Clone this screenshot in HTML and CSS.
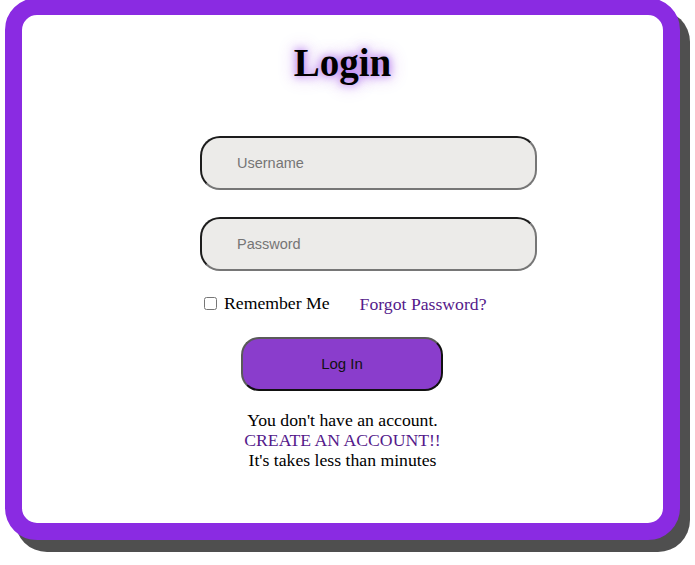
FILE: index.html
```html
<!DOCTYPE html>
<html>
<head>
<meta charset="utf-8">
<title>Login</title>
<link rel="stylesheet" href="styles.css">
</head>
<body>
<div class="card">
  <h1 class="title">Login</h1>
  <form class="form">
    <div class="fields">
      <input class="field" type="text" placeholder="Username">
      <input class="field field-second" type="password" placeholder="Password">
      <div class="options">
        <label class="remember"><input type="checkbox" class="check"> Remember Me</label>
        <a href="#" class="forgot">Forgot Password?</a>
      </div>
    </div>
    <button type="button" class="btn">Log In</button>
  </form>
  <div class="signup">
    <div>You don't have an account.</div>
    <div><a href="#" class="create">CREATE AN ACCOUNT!!</a></div>
    <div>It's takes less than minutes</div>
  </div>
</div>
</body>
</html>
```

FILE: styles.css
```css
html, body {
  margin: 0;
  padding: 0;
  background: #ffffff;
}

body {
  font-family: "Liberation Serif", "Times New Roman", serif;
  color: #000;
  min-height: 565px;
  padding-bottom: 20px;
  box-sizing: border-box;
}

.card {
  box-sizing: border-box;
  width: 675px;
  height: 542px;
  margin: -2px 0 0 5px;
  border: 17px solid #8a2be2;
  border-radius: 32px;
  background: #ffffff;
  box-shadow: 10px 12px 0 #4f4f4f;
  padding-top: 25px;
  display: flex;
  flex-direction: column;
  align-items: stretch;
}

.title {
  margin: 0;
  text-align: center;
  font-size: 39px;
  line-height: 46px;
  font-weight: bold;
  text-shadow: 0 0 8px rgba(138, 43, 226, 0.7), 0 0 18px rgba(138, 43, 226, 0.45);
}

.form {
  margin: 50px 0 0;
  display: flex;
  flex-direction: column;
}

.fields {
  padding-left: 178px;
  display: flex;
  flex-direction: column;
  align-items: flex-start;
}

.field {
  box-sizing: border-box;
  width: 337px;
  height: 54px;
  margin: 0;
  padding: 0 0 0 35px;
  border: 2px solid;
  border-color: #1c1c1c #767676 #767676 #1c1c1c;
  border-radius: 20px;
  background: #ecebe9;
  font-family: "Liberation Sans", Arial, sans-serif;
  font-size: 14.5px;
  color: #222;
  outline: none;
}

.field::placeholder {
  color: #757575;
}

.field-second {
  margin-top: 27px;
}

.options {
  margin-top: 21px;
  display: flex;
  align-items: baseline;
  font-size: 17.7px;
  line-height: 22px;
}

.remember {
  display: flex;
  align-items: center;
  padding-left: 1px;
}

.check {
  width: 13px;
  height: 13px;
  margin: 0 7px 0 3px;
}

.forgot {
  margin-left: 30px;
  color: #551a8b;
  text-decoration: none;
}

.btn {
  box-sizing: border-box;
  align-self: center;
  width: 202px;
  height: 54px;
  margin: 22px 0 0 -1px;
  border: 2px solid;
  border-color: #5a5a5a #111111 #111111 #5a5a5a;
  border-radius: 18px;
  background: #8a3dcc;
  font-family: "Liberation Sans", Arial, sans-serif;
  font-size: 15px;
  color: #111;
  cursor: pointer;
}

.signup {
  margin-top: 19px;
  text-align: center;
  font-size: 17.7px;
  line-height: 20px;
}

.create {
  color: #551a8b;
  text-decoration: none;
}
```
